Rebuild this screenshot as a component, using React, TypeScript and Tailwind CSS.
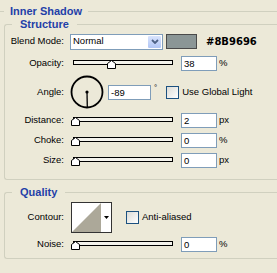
import React from 'react';

const TITLE = "font-bold text-[11px] text-[#1f40a8]";

function Thumb() {
  return (
    <svg width="9" height="9" viewBox="0 0 9 9" className="block">
      <path d="M4.5 0.5 L8.5 3.5 L8.5 8.5 L0.5 8.5 L0.5 3.5 Z" fill="#fff" stroke="#000" strokeWidth="1" />
    </svg>
  );
}

function Slider({ value }: { value: number }) {
  const left = 1 + Math.round(value * 0.94);
  return (
    <div className="relative ml-[6px] w-[104px] h-[15px]">
      <div className="ml-[3px] mt-[4px] w-[100px] h-[5px] border border-black bg-[#f4f3ec]" />
      <div className="absolute top-[4px]" style={{ left }}>
        <Thumb />
      </div>
    </div>
  );
}

function Field({ value, className = 'w-[36px]' }: { value: string; className?: string }) {
  return (
    <div className={`${className} h-[15px] border border-[#7F9DB9] bg-white pl-[2px] leading-[13px]`}>{value}</div>
  );
}

function Checkbox() {
  return <div className="w-[13px] h-[13px] border border-[#1C5180] bg-gradient-to-br from-[#dcdcd7] to-white" />;
}

function Label({ children }: { children: React.ReactNode }) {
  return <div className="w-[59px] shrink-0 text-right">{children}</div>;
}

function SliderRow({ label, percent, value, unit, className }: { label: string; percent: number; value: string; unit: string; className: string }) {
  return (
    <div className={`flex items-center h-[15px] ${className}`}>
      <Label>{label}</Label>
      <Slider value={percent} />
      <div className="ml-[7px]">
        <Field value={value} />
      </div>
      <span className="ml-[2px]">{unit}</span>
    </div>
  );
}

export default function App() {
  return (
    <div className="w-[277px] h-[273px] overflow-hidden bg-[#ECE9D8] pt-[5px] font-['Liberation_Sans',Arial,sans-serif] text-[9.5px] text-black">
      <fieldset className="border-t border-[#D0D0BF]">
        <legend className={`ml-[4px] px-[6px] leading-[12px] ${TITLE}`}>Inner Shadow</legend>

        <fieldset className="ml-[4px] border-l border-t border-b border-[#D0D0BF] rounded-l-[3px] pb-[11px]">
          <legend className={`ml-[7px] px-[8px] leading-[14px] ${TITLE}`}>Structure</legend>

          <div className="flex items-center h-[17px] mt-[2px]">
            <Label>Blend Mode:</Label>
            <div className="ml-[6px] flex items-center w-[93px] h-[16px] border border-[#7F9DB9] bg-white">
              <span className="flex-1 pl-[2px]">Normal</span>
              <div className="w-[15px] h-[14px] rounded-[2px] border border-white bg-gradient-to-b from-[#d9e4fd] to-[#b1c6f5] flex items-center justify-center">
                <svg width="8" height="5" viewBox="0 0 8 5">
                  <path d="M1 1 L4 4 L7 1" fill="none" stroke="#4D6185" strokeWidth="1.8" />
                </svg>
              </div>
            </div>
            <div className="ml-[3px] w-[31px] h-[15px] bg-[#8B9696] border border-[#4a4a4a]" />
            <span className="ml-[9px] font-['DejaVu_Sans',Verdana,sans-serif] font-bold text-[10px]">#8B9696</span>
          </div>

          <SliderRow label="Opacity:" percent={38} value="38" unit="%" className="mt-[6px]" />

          <div className="flex items-center h-[34px] mt-[4px]">
            <Label>Angle:</Label>
            <svg width="34" height="34" viewBox="0 0 34 34" className="ml-[6px]">
              <circle cx="17" cy="17" r="15.5" fill="none" stroke="#000" strokeWidth="1.8" />
              <circle cx="17" cy="17" r="1.6" fill="#000" />
              <line x1="17" y1="17" x2="17.3" y2="32" stroke="#000" strokeWidth="1.3" />
            </svg>
            <div className="ml-[4px]">
              <Field value="-89" className="w-[43px]" />
            </div>
            <span className="ml-[3px] self-start mt-[7px] text-[8px]">°</span>
            <div className="ml-[9px]">
              <Checkbox />
            </div>
            <span className="ml-[3px]">Use Global Light</span>
          </div>

          <SliderRow label="Distance:" percent={0} value="2" unit="px" className="mt-[4px]" />
          <SliderRow label="Choke:" percent={0} value="0" unit="%" className="mt-[5px]" />
          <SliderRow label="Size:" percent={0} value="0" unit="px" className="mt-[5px]" />
        </fieldset>

        <fieldset className="ml-[4px] mt-[5px] border-l border-t border-b border-[#D0D0BF] rounded-l-[3px] pb-[6px]">
          <legend className={`ml-[7px] px-[8px] leading-[14px] ${TITLE}`}>Quality</legend>

          <div className="flex items-center h-[31px] mt-[3px]">
            <Label>Contour:</Label>
            <div className="ml-[7px] flex w-[41px] h-[31px] border border-[#333] bg-white">
              <svg width="29" height="29" viewBox="0 0 29 29" className="block">
                <polygon points="0,29 29,0 29,29" fill="#aca899" />
              </svg>
              <div className="flex-1 flex items-center justify-center">
                <svg width="5" height="3" viewBox="0 0 5 3">
                  <polygon points="0,0 5,0 2.5,3" fill="#000" />
                </svg>
              </div>
            </div>
            <div className="ml-[14px]">
              <Checkbox />
            </div>
            <span className="ml-[3px]">Anti-aliased</span>
          </div>

          <SliderRow label="Noise:" percent={0} value="0" unit="%" className="mt-[4px]" />
        </fieldset>
      </fieldset>
    </div>
  );
}
